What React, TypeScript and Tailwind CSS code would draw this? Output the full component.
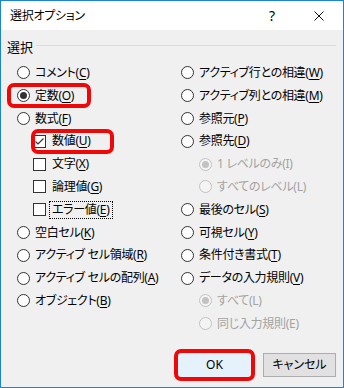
import React from 'react';

type Item = {
  kind: 'radio' | 'check';
  label: string;
  k: string;
  checked?: boolean;
  indent?: boolean;
  disabled?: boolean;
  mark?: boolean;
  focus?: boolean;
};

const leftItems: Item[] = [
  { kind: 'radio', label: 'コメント', k: 'C' },
  { kind: 'radio', label: '定数', k: 'O', checked: true, mark: true },
  { kind: 'radio', label: '数式', k: 'F' },
  { kind: 'check', label: '数値', k: 'U', checked: true, indent: true, mark: true },
  { kind: 'check', label: '文字', k: 'X', indent: true },
  { kind: 'check', label: '論理値', k: 'G', indent: true },
  { kind: 'check', label: 'エラー値', k: 'E', indent: true, focus: true },
  { kind: 'radio', label: '空白セル', k: 'K' },
  { kind: 'radio', label: 'アクティブ セル領域', k: 'R' },
  { kind: 'radio', label: 'アクティブ セルの配列', k: 'A' },
  { kind: 'radio', label: 'オブジェクト', k: 'B' },
];

const rightItems: Item[] = [
  { kind: 'radio', label: 'アクティブ行との相違', k: 'W' },
  { kind: 'radio', label: 'アクティブ列との相違', k: 'M' },
  { kind: 'radio', label: '参照元', k: 'P' },
  { kind: 'radio', label: '参照先', k: 'D' },
  { kind: 'radio', label: '1 レベルのみ', k: 'I', indent: true, disabled: true, checked: true },
  { kind: 'radio', label: 'すべてのレベル', k: 'L', indent: true, disabled: true },
  { kind: 'radio', label: '最後のセル', k: 'S' },
  { kind: 'radio', label: '可視セル', k: 'Y' },
  { kind: 'radio', label: '条件付き書式', k: 'T' },
  { kind: 'radio', label: 'データの入力規則', k: 'V' },
  { kind: 'radio', label: 'すべて', k: 'L', indent: true, disabled: true, checked: true },
  { kind: 'radio', label: '同じ入力規則', k: 'E', indent: true, disabled: true },
];

const Radio = ({ checked, disabled }: { checked?: boolean; disabled?: boolean }) => (
  <span
    className={`w-[13px] h-[13px] rounded-full border flex items-center justify-center shrink-0 ${
      disabled ? 'border-[#c2c2c2] bg-[#f4f4f4]' : 'border-[#333333] bg-white'
    }`}
  >
    {checked && (
      <span className={`w-[7px] h-[7px] rounded-full ${disabled ? 'bg-[#c2c2c2]' : 'bg-[#333333]'}`} />
    )}
  </span>
);

const Check = ({ checked }: { checked?: boolean }) => (
  <span className="w-[13px] h-[13px] border border-[#333333] bg-white flex items-center justify-center shrink-0">
    {checked && (
      <svg width="11" height="11" viewBox="0 0 11 11">
        <polyline points="1.5,5.5 4,8 9.5,2.5" fill="none" stroke="#333" strokeWidth="1.2" />
      </svg>
    )}
  </span>
);

const Row = ({ item, indent }: { item: Item; indent: string }) => (
  <div className={`relative h-[22.8px] flex items-center gap-[5px] ${item.indent ? indent : ''}`}>
    {item.mark && (
      <div
        className={`absolute -top-[1px] -bottom-[1px] border-[4px] border-[#f00808] rounded-[7px] ${
          item.kind === 'radio' ? '-left-[10px] w-[84px]' : '-left-[2px] w-[83px]'
        }`}
      />
    )}
    {item.kind === 'radio' ? (
      <Radio checked={item.checked} disabled={item.disabled} />
    ) : (
      <Check checked={item.checked} />
    )}
    <span
      className={`whitespace-nowrap leading-none tracking-[-0.3px] ${item.disabled ? 'text-[#a3a3a3]' : 'text-black'} ${
        item.focus ? 'outline outline-1 outline-dotted outline-black outline-offset-[2px]' : ''
      } ${item.kind === 'check' ? 'ml-[1px]' : ''}`}
    >
      {item.label}(<span className={item.disabled ? '' : 'underline underline-offset-[2px]'}>{item.k}</span>)
    </span>
  </div>
);

export default function App() {
  return (
    <div className="w-[344px] h-[388px] border border-[#1b84d6] flex flex-col font-['Noto_Sans','Noto_Sans_CJK_JP',sans-serif] [font-feature-settings:'palt'] text-[12px] text-black overflow-hidden">
      <div className="h-[29px] bg-white flex items-center shrink-0">
        <span className="pl-[9px] text-[12px] tracking-[-0.3px]">選択オプション</span>
        <span className="ml-auto mr-[39px] text-[14px]">?</span>
        <svg width="10" height="10" viewBox="0 0 10 10" className="mr-[19px]">
          <path d="M0.5 0.5 L9.5 9.5 M9.5 0.5 L0.5 9.5" stroke="#111" strokeWidth="1" />
        </svg>
      </div>

      <div className="flex-1 bg-[#f0f0f0] flex flex-col">
        <div className="flex items-center pt-[9px] h-[25px] pl-[6px] pr-[7px] gap-[3px]">
          <span className="text-[13px] leading-none">選択</span>
          <div className="flex-1 h-px bg-[#dcdcdc] -mt-[3px]" />
        </div>

        <div className="grid grid-cols-[164px_1fr] pl-[16px] mt-[6.6px]">
          <div className="flex flex-col">
            {leftItems.map((it, i) => (
              <Row key={i} item={it} indent="ml-[16px]" />
            ))}
          </div>
          <div className="flex flex-col">
            {rightItems.map((it, i) => (
              <Row key={i} item={it} indent="ml-[18px]" />
            ))}
          </div>
        </div>

        <div className="mt-auto flex justify-end gap-[12px] pr-[7px] pb-[10px]">
          <div className="relative">
            <div className="absolute -inset-[4px] border-[4px] border-[#f00808] rounded-[7px]" />
            <button className="w-[73px] h-[24px] bg-[#e5f1fb] flex items-center justify-center">OK</button>
          </div>
          <button className="w-[73px] h-[24px] bg-[#e1e1e1] border border-[#adadad] flex items-center justify-center">
            キャンセル
          </button>
        </div>
      </div>
    </div>
  );
}
